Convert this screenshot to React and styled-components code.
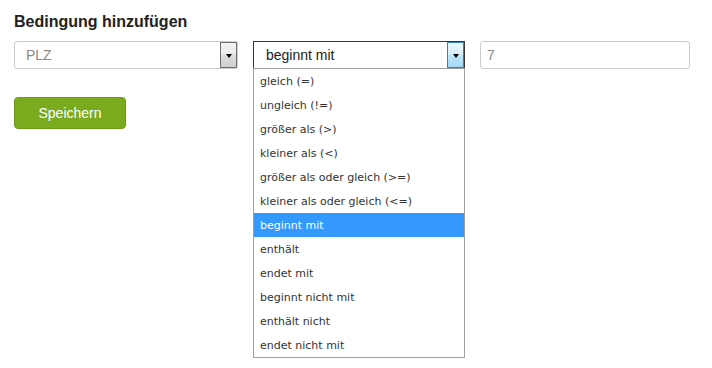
import React from "react";
import styled, { createGlobalStyle } from "styled-components";

const Global = createGlobalStyle`
  html, body { margin: 0; padding: 0; background: #fff; }
  body { font-family: "Liberation Sans", Arial, sans-serif; }
`;

const Page = styled.div`
  box-sizing: border-box;
  min-height: 368px;
  padding: 13px 14px;
`;

const Title = styled.h3`
  margin: 0 0 10px 0;
  font-size: 16px;
  font-weight: bold;
  color: #222;
  line-height: 18px;
`;

const Row = styled.div`
  display: flex;
  gap: 15px;
  align-items: flex-start;
`;

const SelectWrap = styled.div`
  position: relative;
  width: ${(p) => p.$w}px;
`;

const SelectBox = styled.div`
  box-sizing: border-box;
  height: 28px;
  border: 1px solid ${(p) => (p.$focus ? "#3a3a3a" : "#cccccc")};
  border-radius: ${(p) => (p.$focus ? "0" : "3px")};
  display: flex;
  align-items: center;
  padding-left: ${(p) => (p.$focus ? "12px" : "11px")};
  font-size: 14px;
  color: ${(p) => (p.$focus ? "#222" : "#888")};
  position: relative;
`;

const DropBtn = styled.div`
  position: absolute;
  top: 0;
  right: 0;
  width: 17px;
  height: 26px;
  box-sizing: border-box;
  border: 1px solid ${(p) => (p.$focus ? "#3c7fb1" : "#707070")};
  background: ${(p) =>
    p.$focus
      ? "linear-gradient(#eaf6fd, #d9f0fc 45%, #bee6fd 50%, #a7d9f5)"
      : "linear-gradient(#f2f2f2, #ebebeb 45%, #dddddd 50%, #cfcfcf)"};
  display: flex;
  align-items: center;
  justify-content: center;
`;

const Arrow = styled.div`
  width: 0;
  height: 0;
  border-left: 3.5px solid transparent;
  border-right: 3.5px solid transparent;
  border-top: 4px solid #000;
  margin-top: 1px;
`;

const List = styled.ul`
  position: absolute;
  left: 0;
  top: 27px;
  width: 100%;
  box-sizing: border-box;
  margin: 0;
  padding: 0;
  list-style: none;
  border: 1px solid #a0a0a0;
  background: #fff;
  z-index: 2;
`;

const Item = styled.li`
  height: 24px;
  line-height: 25px;
  padding-left: 6px;
  font-family: "DejaVu Sans", Verdana, sans-serif;
  font-size: 11px;
  color: ${(p) => (p.$active ? "#fff" : "#333")};
  background: ${(p) => (p.$active ? "#3399ff" : "transparent")};
`;

const Input = styled.div`
  box-sizing: border-box;
  width: 210px;
  height: 28px;
  border: 1px solid #cccccc;
  border-radius: 3px;
  display: flex;
  align-items: center;
  padding-left: 6px;
  font-size: 14px;
  color: #888;
`;

const Button = styled.button`
  margin-top: 28px;
  width: 112px;
  height: 32px;
  border: 1px solid #6f9a15;
  border-radius: 4px;
  background: #7aab1e;
  color: #fff;
  font-family: "Liberation Sans", Arial, sans-serif;
  font-size: 14px;
  padding: 0;
`;

const options = [
  "gleich (=)",
  "ungleich (!=)",
  "größer als (>)",
  "kleiner als (<)",
  "größer als oder gleich (>=)",
  "kleiner als oder gleich (<=)",
  "beginnt mit",
  "enthält",
  "endet mit",
  "beginnt nicht mit",
  "enthält nicht",
  "endet nicht mit",
];

export default function App() {
  return (
    <Page>
      <Global />
      <Title>Bedingung hinzufügen</Title>
      <Row>
        <SelectWrap $w={224}>
          <SelectBox>
            PLZ
            <DropBtn>
              <Arrow />
            </DropBtn>
          </SelectBox>
        </SelectWrap>
        <SelectWrap $w={212}>
          <SelectBox $focus>
            beginnt mit
            <DropBtn $focus>
              <Arrow />
            </DropBtn>
          </SelectBox>
          <List>
            {options.map((o) => (
              <Item key={o} $active={o === "beginnt mit"}>
                {o}
              </Item>
            ))}
          </List>
        </SelectWrap>
        <Input>7</Input>
      </Row>
      <Button>Speichern</Button>
    </Page>
  );
}
